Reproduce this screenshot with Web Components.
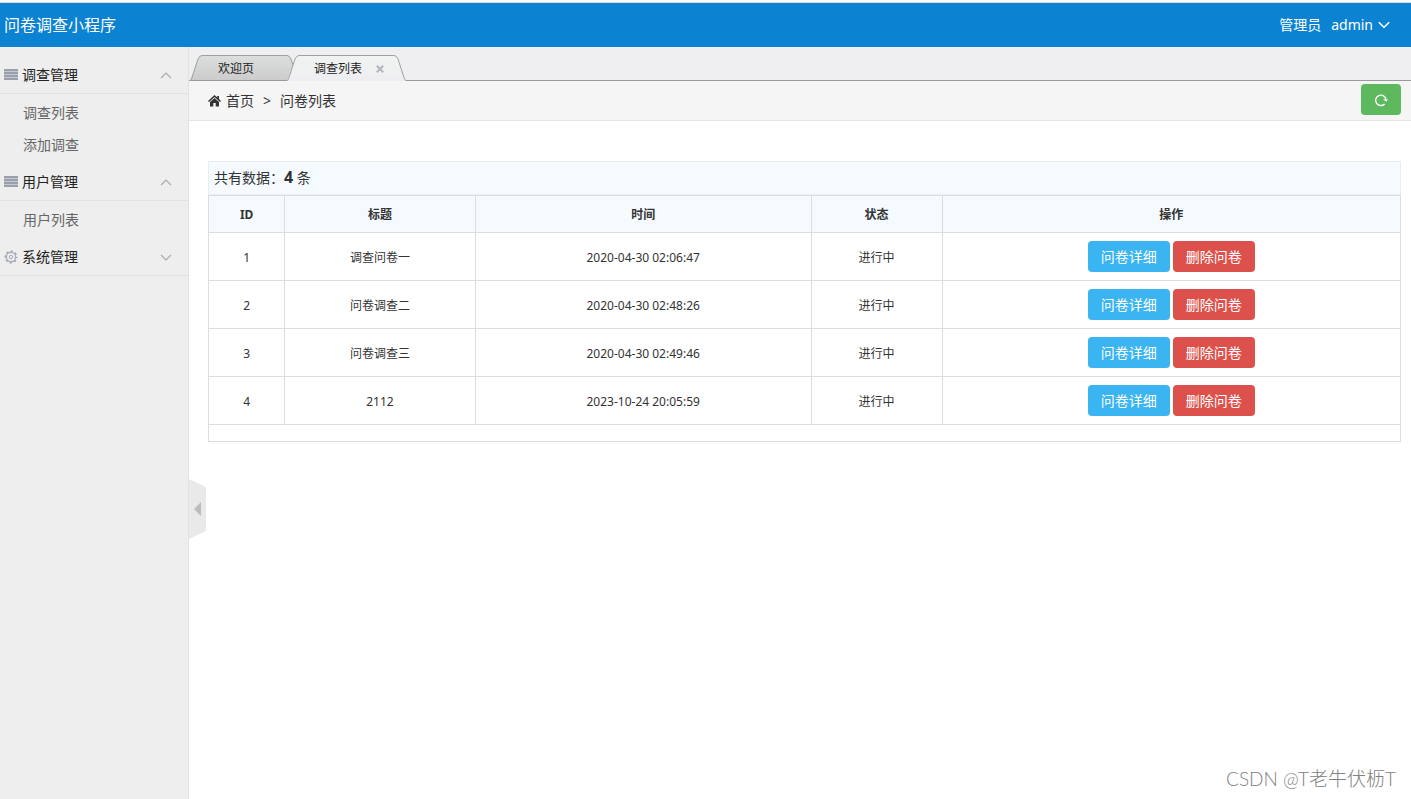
<!DOCTYPE html>
<html lang="zh-CN">
<head>
<meta charset="utf-8">
<title>问卷调查小程序</title>
<style>
html, body { height: 100%; margin: 0; }
body { font: 14px/20px "Noto Sans", "Noto Sans CJK SC", sans-serif; color: #333; background: #fff; }
</style>
</head>
<body>
<survey-app></survey-app>
<script>
const define = (name, html, setup) => {
  const template = document.createElement('template');
  template.innerHTML = html;
  customElements.define(name, class extends HTMLElement {
    constructor() {
      super();
      this.attachShadow({ mode: 'open' }).append(template.content.cloneNode(true));
    }
    connectedCallback() { if (setup) setup(this.shadowRoot, this); }
  });
};

define('app-header', `
<style>
:host { display: flex; justify-content: space-between; align-items: center; height: 44px; padding: 0 21px 0 4px; border-top: 1px solid #ddd; background: #0c82d2; color: #fff; }
h1 { margin: 0; font-size: 16px; line-height: 24px; font-weight: 400; }
.user { display: flex; align-items: center; gap: 10px; }
button { display: flex; align-items: center; gap: 5px; padding: 0; border: 0; background: none; color: inherit; font: inherit; }
</style>
<h1><slot></slot></h1>
<div class="user"><slot name="role"></slot>
<button type="button"><slot name="name"></slot><svg width="12" height="8" viewBox="0 0 12 8" fill="none" stroke="#fff" stroke-width="1.5"><path d="M.8 1.2 6 6.2 11.200 1.200"/></svg></button></div>`);

define('nav-group', `
<style>
:host { display: block; }
button { display: flex; align-items: center; width: 100%; height: 37px; padding: 0 16px 0 4px; border: 0; border-bottom: 1px solid #e2e2e2; background: none; color: #222; font: inherit; }
.icon { width: 14px; height: 14px; margin-right: 4px; }
.icon svg { display: block; }
.arrow { margin-left: auto; }
.list { padding: 3px 0; }
:host(:not([open])) .list, :host([open]) .down, :host(:not([open])) .up,
:host([icon="gear"]) .bars, :host([icon="bars"]) .gear { display: none; }
</style>
<button type="button">
<span class="icon">
<svg class="bars" width="14" height="14" viewBox="0 0 14 14"><path fill="#c6c9d0" d="M0 1h14v11H0z"/><path fill="#9a9fac" d="M0 1h14v2H0zM0 4h14v2H0zM0 7h14v2H0zM0 10h14v2H0z"/></svg>
<svg class="gear" width="14" height="14" viewBox="0 0 14 14" fill="none" stroke="#a5aab6"><circle cx="7" cy="7" r="5.700" stroke-width="1.600" stroke-dasharray="2.440 2.037" stroke-dashoffset="1.220"/><circle cx="7" cy="7" r="4.600" stroke-width="1.200"/><circle cx="7" cy="7" r="1.700"/></svg>
</span>
<slot name="title"></slot>
<svg class="arrow" width="12" height="7" viewBox="0 0 12 7" fill="none" stroke="#aaa" stroke-width="1.2"><path class="up" d="M1 6 6 1l5 5"/><path class="down" d="M1 1l5 5 5-5"/></svg>
</button>
<div class="list"><slot></slot></div>`);

define('nav-item', `
<style>
:host { display: block; }
a { display: block; padding-left: 23px; line-height: 32px; color: #666; text-decoration: none; }
</style>
<a href="#"><slot></slot></a>`);

define('side-nav', `
<style>
:host { display: block; flex: 0 0 188px; padding-top: 10px; border-right: 1px solid #e2e2e2; background: #eee; }
nav { display: block; }
</style>
<nav><slot></slot></nav>`);

define('app-tab', `
<style>
:host { display: flex; height: 26px; position: relative; --line: #a0a0a0; }
svg { flex: none; display: block; }
.body { display: flex; align-items: center; box-sizing: border-box; border-top: 1px solid var(--line); background: linear-gradient(#dcdedd, #cbcbcc); }
:host([active]) .body { background: linear-gradient(#f0f3f2, #eeeef0); }
.body > button { padding: 0 33px 0 16px; border: 0; background: none; color: #222; font: inherit; font-size: 12px; line-height: 20px; }
:host([active]) .body > button { padding: 0 14px 0 15px; }
.body > .close { display: none; }
:host([active]) .body > .close { display: block; padding: 0; margin-right: 10px; }
stop { stop-color: #dcdedd; }
stop + stop { stop-color: #cbcbcc; }
:host([active]) stop { stop-color: #f0f3f2; }
:host([active]) stop + stop { stop-color: #eeeef0; }
.base { stroke: #999; }
:host([active]) .base { stroke: #eeeef0; }
:host(:not([active])) .body { box-shadow: inset 0 -1px #999; }
</style>
<svg width="12" height="26" viewBox="0 0 12 26"><defs><linearGradient id="g" x2="0" y2="1"><stop offset="0"/><stop offset="1"/></linearGradient></defs><path d="M0 26 8 4Q9.500 .5 12 .5V26z" fill="url(#g)"/><path class="base" d="M1 25.500h11"/><path d="M0 25.500Q1 25.500 2 22.500L8 4Q9.500 .5 12 .5" fill="none" stroke="#a0a0a0"/></svg>
<div class="body"><button type="button"><slot></slot></button><button class="close" type="button" aria-label="关闭"><svg width="8" height="8" viewBox="0 0 8 8" stroke="#b2b7bd" stroke-width="2"><path d="M.8.8l6.400 6.400M7.200.8.8 7.200"/></svg></button></div>
<svg width="12" height="26" viewBox="0 0 12 26"><defs><linearGradient id="h" x2="0" y2="1"><stop offset="0"/><stop offset="1"/></linearGradient></defs><path d="M12 26 4 4Q2.500 .5 0 .5V26z" fill="url(#h)"/><path class="base" d="M11 25.500H0"/><path d="M12 25.500Q11 25.500 10 22.500L4 4Q2.500 .5 0 .5" fill="none" stroke="#a0a0a0"/></svg>`);

define('tab-bar', `
<style>
:host { display: block; background: linear-gradient(#999, #999) bottom / 100% 1px no-repeat #efeef0; }
div { display: flex; align-items: flex-end; height: 34px; padding-left: 1px; }
::slotted([active]) { margin-left: -12px; }
</style>
<div><slot></slot></div>`);

define('bread-crumb', `
<style>
:host { display: flex; align-items: center; height: 39px; padding: 0 10px 0 19px; border-bottom: 1px solid #e5e5e5; background: #f5f5f5; }
nav { display: flex; align-items: center; }
nav svg { margin-right: 5px; }
a { color: inherit; text-decoration: none; }
.sep { margin: 0 9px; }
.refresh { display: flex; align-items: center; justify-content: center; width: 40px; height: 31px; margin: 0 0 2px auto; padding: 0; border: 0; border-radius: 4px; background: #5eb95e; }
</style>
<nav>
<svg width="13" height="12" viewBox="0 0 13 12" fill="#333"><path d="M6.500 0 0 5.900l1 1.100 5.500-4.900L12 7l1-1.100-2-1.800V1H9.300v1.500z"/><path d="M6.500 3.100 2 7.100V11.500h3.300V8h2.400v3.500H11V7.100z"/></svg>
<a href="#"><slot name="home"></slot></a><span class="sep">&gt;</span><slot></slot>
</nav>
<button class="refresh" type="button" aria-label="刷新"><svg width="14" height="14" viewBox="0 0 14 14"><path d="M11.900 6.200A5.200 5.200 0 1 0 10.600 10.900" fill="none" stroke="#fff" stroke-width="1.400"/><path d="M9 6.200h5L12.300 8.800z" fill="#fff"/></svg></button>`);

define('data-summary', `
<style>
:host { display: block; height: 32px; line-height: 32px; padding: 0 5px; border: 1px solid #e8edf0; border-bottom-color: #eee; background: #f5fafe; }
strong { font-size: 16px; line-height: 16px; font-weight: 700; }
</style>
共有数据：<strong><slot></slot></strong> 条`);

define('ui-button', `
<style>
:host { display: block; }
button { display: block; width: 82px; height: 31px; padding: 0; border: 0; border-radius: 4px; background: #3bb4f2; color: #fff; font: inherit; font-size: 14px; }
:host([kind="danger"]) button { background: #dd514c; }
</style>
<button type="button"><slot></slot></button>`);

define('survey-table', `
<style>
:host { display: block; padding-bottom: 16px; border: 1px solid #ddd; }
table { width: 100%; table-layout: fixed; border-collapse: separate; border-spacing: 0; font-size: 12px; line-height: 20px; }
th, td { box-sizing: border-box; height: 48px; padding: 2px 0 0; border: 0 solid #ddd; border-width: 0 1px 1px 0; text-align: center; }
th { height: 37px; background: #f5fafe; font-weight: 700; }
th:last-child, td:last-child { border-right: 0; }
td:last-child { padding: 0; }
.id { width: 6.4%; } .title { width: 16%; } .time { width: 28.2%; } .state { width: 11%; }
.actions { display: flex; justify-content: center; gap: 3px; }
</style>
<table>
<colgroup><col class="id"><col class="title"><col class="time"><col class="state"><col></colgroup>
<thead><tr><th>ID</th><th>标题</th><th>时间</th><th>状态</th><th>操作</th></tr></thead>
<tbody></tbody>
</table>`, root => {
  const rows = [
    ['1', '调查问卷一', '2020-04-30 02:06:47', '进行中'],
    ['2', '问卷调查二', '2020-04-30 02:48:26', '进行中'],
    ['3', '问卷调查三', '2020-04-30 02:49:46', '进行中'],
    ['4', '2112', '2023-10-24 20:05:59', '进行中']
  ];
  root.querySelector('tbody').innerHTML = rows.map(row =>
    '<tr>' + row.map(cell => '<td>' + cell + '</td>').join('') +
    '<td><div class="actions"><ui-button>问卷详细</ui-button><ui-button kind="danger">删除问卷</ui-button></div></td></tr>').join('');
});

define('side-toggle', `
<style>
:host { display: block; position: absolute; left: 189px; top: 60%; }
button { display: block; padding: 0; border: 0; background: none; }
svg { display: block; }
</style>
<button type="button" aria-label="收起菜单"><svg width="17" height="60" viewBox="0 0 17 60"><path d="M0 0l15 7q2 1 2 3v40q0 2-2 3L0 60z" fill="#e9e9e9"/><path d="M12 23v14L5 30z" fill="#bbb"/></svg></button>`);

define('water-mark', `
<style>
:host { display: block; position: absolute; right: 15px; bottom: 6px; font-size: 19px; line-height: 28px; font-family: Lato, "Noto Sans CJK SC", sans-serif; font-weight: 300; color: #808080; text-shadow: -1px -1px 0 #fff; white-space: nowrap; }
</style>
<slot></slot>`);

define('survey-app', `
<style>
:host { display: flex; flex-direction: column; min-height: 100%; box-sizing: border-box; padding-top: 2px; position: relative; }
.columns { display: flex; flex: 1; }
main { flex: 1; min-width: 0; }
.content { padding: 40px 10px 0 19px; }
</style>
<app-header>问卷调查小程序<span slot="role">管理员</span><span slot="name">admin</span></app-header>
<div class="columns">
<side-nav>
<nav-group icon="bars" open><span slot="title">调查管理</span><nav-item>调查列表</nav-item><nav-item>添加调查</nav-item></nav-group>
<nav-group icon="bars" open><span slot="title">用户管理</span><nav-item>用户列表</nav-item></nav-group>
<nav-group icon="gear"><span slot="title">系统管理</span></nav-group>
</side-nav>
<main>
<tab-bar><app-tab>欢迎页</app-tab><app-tab active>调查列表</app-tab></tab-bar>
<bread-crumb><span slot="home">首页</span>问卷列表</bread-crumb>
<div class="content"><data-summary>4</data-summary><survey-table></survey-table></div>
</main>
</div>
<side-toggle></side-toggle>
<water-mark>CSDN @T老牛伏枥T</water-mark>`);
</script>
</body>
</html>
